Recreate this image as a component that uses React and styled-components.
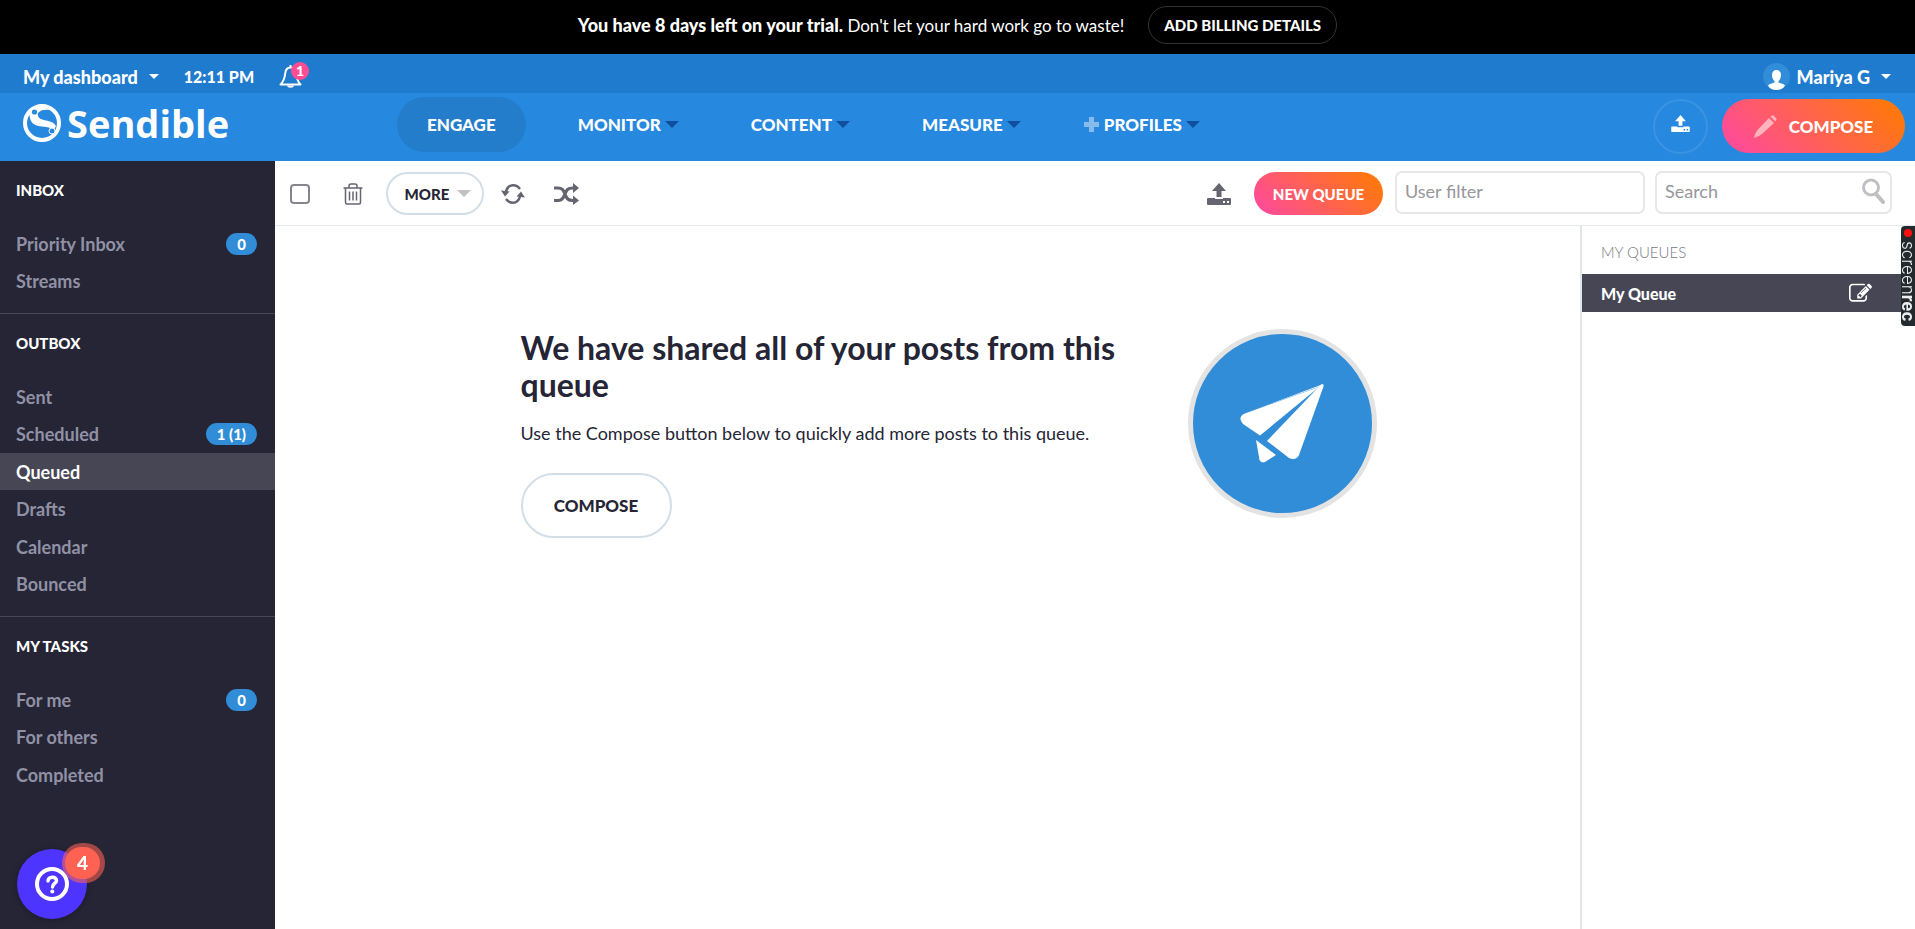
import React from "react";
import styled, { createGlobalStyle, css } from "styled-components";

const GlobalStyle = createGlobalStyle`
  * {
    box-sizing: border-box;
  }
  html, body, #root {
    height: 100%;
  }
  body {
    margin: 0;
    background: #fff;
    color: #252536;
    font-family: Lato, "Open Sans", sans-serif;
    font-size: 18px;
  }
  button, input {
    font-family: inherit;
  }
  h1, h2, p, ul {
    margin: 0;
    padding: 0;
  }
  ul {
    list-style: none;
  }
  a {
    color: inherit;
    text-decoration: none;
  }
  svg {
    display: block;
    flex: none;
  }
`;

const Page = styled.div`
  display: flex;
  flex-direction: column;
  min-height: 100%;
`;

/* trial banner */

const Banner = styled.div`
  display: flex;
  justify-content: center;
  align-items: flex-start;
  gap: 24px;
  height: 54px;
  padding: 6px 0 0;
  background: #000;
  color: #fff;
  line-height: 38px;
`;

const BannerText = styled.p`
  font-size: 17px;
  line-height: 38px;

  b {
    font-size: 18px;
    font-weight: 900;
  }
`;

const BillingButton = styled.button`
  height: 38px;
  padding: 0 15px;
  border: 1px solid #333;
  border-radius: 19px;
  background: none;
  color: #fff;
  font-size: 15px;
  font-weight: 900;
`;

/* header */

const TopBar = styled.div`
  display: flex;
  align-items: center;
  justify-content: space-between;
  height: 39px;
  padding: 6px 24px 0 23px;
  background: #1f7bcd;
  color: #fff;
`;

const TopGroup = styled.div`
  display: flex;
  align-items: center;
  gap: ${(props) => props.$gap}px;
`;

const TopButton = styled.button`
  display: flex;
  align-items: center;
  gap: 11px;
  padding: 0;
  border: 0;
  background: none;
  color: #fff;
  font-size: 18px;
  font-weight: 900;
`;

const Clock = styled.span`
  font-size: 16px;
  font-weight: 900;
`;

const BellButton = styled.button`
  position: relative;
  padding: 0;
  border: 0;
  background: none;
  color: #fff;
`;

const BellCount = styled.span`
  position: absolute;
  top: -2px;
  left: 12px;
  width: 18px;
  height: 18px;
  border-radius: 50%;
  background: #ff4d94;
  font-size: 14px;
  font-weight: 900;
  line-height: 18px;
  text-align: center;
`;

const Header = styled.header`
  display: flex;
  align-items: center;
  height: 68px;
  padding: 0 10px 2px 23px;
  background: #2688de;
  color: #fff;
`;

const Brand = styled.a`
  display: flex;
  align-items: center;
  gap: 6px;
  width: 374px;
  padding-bottom: 6px;
  font-family: "Open Sans", "Noto Sans", sans-serif;
  font-size: 38px;
  font-weight: 700;
  line-height: 46px;
`;

const Nav = styled.nav`
  display: flex;
  flex: 1;
  gap: 22px;
  padding-bottom: 4px;
`;

const NavLink = styled.a`
  display: flex;
  align-items: center;
  gap: 4px;
  height: 55px;
  padding: 0 ${(props) => (props.$menu ? 20 : 30)}px 0 ${(props) => (props.$icon ? 20 : 30)}px;
  border-radius: 28px;
  background: ${(props) => (props.$active ? "#247dcb" : "none")};
  font-size: 17px;
  font-weight: 900;
`;

const Caret = styled.span`
  border: ${(props) => props.$size}px solid transparent;
  border-top-color: ${(props) => props.$color || "#fff"};
  border-bottom: 0;
`;

const RoundButton = styled.button`
  display: flex;
  align-items: center;
  justify-content: center;
  width: 55px;
  height: 55px;
  margin-right: 14px;
  padding: 0 0 6px;
  border: 2px solid #3b93e1;
  border-radius: 50%;
  background: none;
  color: #fff;
`;

const GradientButton = styled.button`
  display: flex;
  align-items: center;
  justify-content: center;
  border: 0;
  border-radius: 28px;
  background: linear-gradient(45deg, #ff4d94 10%, #ff770f 90%);
  color: #fff;
  font-weight: 900;
  ${(props) =>
    props.$large
      ? css`
          gap: 12px;
          width: 183px;
          height: 54px;
          font-size: 17px;
        `
      : css`
          width: 129px;
          height: 43px;
          font-size: 15px;
        `}
`;

/* sidebar */

const Body = styled.div`
  display: flex;
  flex: 1;
`;

const Sidebar = styled.aside`
  width: 275px;
  background: #252536;
`;

const Section = styled.section`
  padding: 15px 0 13px;

  & + & {
    border-top: 1px solid #474757;
  }
`;

const SectionTitle = styled.h2`
  margin-bottom: 21px;
  padding: 0 16px;
  color: #fff;
  font-size: 15px;
  font-weight: 900;
  line-height: 28px;
`;

const SideItem = styled.li`
  height: 37px;

  &:nth-child(even) {
    height: 38px;
  }
`;

const SideLink = styled.a`
  display: flex;
  align-items: center;
  justify-content: space-between;
  height: 100%;
  padding: 0 18px 0 16px;
  background: ${(props) => (props.$active ? "#464655" : "none")};
  color: ${(props) => (props.$active ? "#fff" : "#9191a5")};
  font-size: 18px;
  font-weight: 700;
`;

const Count = styled.span`
  min-width: 31px;
  padding: 0 11px;
  border-radius: 11px;
  background: #318dd8;
  color: #fff;
  font-size: 15px;
  font-weight: 900;
  line-height: 22px;
  text-align: center;
`;

/* toolbar */

const Main = styled.main`
  display: flex;
  flex: 1;
  flex-direction: column;
  min-width: 0;
`;

const Toolbar = styled.div`
  display: flex;
  align-items: center;
  height: 65px;
  padding: 1px 23px 0 15px;
  border-bottom: 1px solid #e7eaed;
  color: #656572;
`;

const Spacer = styled.div`
  flex: 1;
`;

const SelectAll = styled.input`
  appearance: none;
  width: 20px;
  height: 20px;
  margin: 0 33px 0 0;
  border: 2px solid #85858e;
  border-radius: 4px;
`;

const IconButton = styled.button`
  display: flex;
  margin-right: ${(props) => props.$after || 0}px;
  padding: 0;
  border: 0;
  background: none;
  color: inherit;
`;

const OutlineButton = styled.button`
  display: flex;
  align-items: center;
  justify-content: center;
  gap: 8px;
  border: 2px solid #d3dee7;
  background: #fff;
  color: #252536;
  ${(props) =>
    props.$large
      ? css`
          width: 151px;
          height: 65px;
          border-radius: 33px;
          font-size: 17px;
          font-weight: 900;
        `
      : css`
          width: 98px;
          height: 43px;
          margin-right: 17px;
          padding: 0 0 0 6px;
          border-radius: 22px;
          font-size: 15px;
          font-weight: 900;
        `}
`;

const Field = styled.label`
  display: flex;
  align-items: center;
  width: ${(props) => props.$width}px;
  height: 43px;
  margin: 0 0 3px ${(props) => props.$before}px;
  padding: 0 5px 3px 8px;
  border: 2px solid #e7e7e8;
  border-radius: 7px;
  color: #bfbfc4;
`;

const TextInput = styled.input`
  flex: 1;
  min-width: 0;
  padding: 0;
  border: 0;
  outline: 0;
  background: none;
  color: #252536;
  font-size: 18px;

  &::placeholder {
    color: #96969b;
    opacity: 1;
  }
`;

/* content */

const Content = styled.div`
  display: flex;
  flex: 1;
`;

const EmptyArea = styled.div`
  flex: 1;
  padding: 103px 54px 0 96px;
`;

const EmptyState = styled.div`
  display: flex;
  justify-content: space-between;
  max-width: 856px;
  margin: 0 auto;
`;

const EmptyText = styled.div`
  width: 620px;
`;

const Title = styled.h1`
  font-size: 32px;
  font-weight: 700;
  line-height: 37px;
`;

const Hint = styled.p`
  margin: 16px 0 26px;
  font-size: 18px;
  line-height: 28px;
`;

const QueuePanel = styled.aside`
  width: 335px;
  border-left: 2px solid #e2e6ea;
`;

const QueueHeading = styled.h2`
  padding: 12px 19px 8px;
  color: #78787f;
  font-size: 15px;
  font-weight: 300;
  line-height: 28px;
`;

const QueueRow = styled.div`
  display: flex;
  align-items: center;
  justify-content: space-between;
  height: 38px;
  padding: 0 43px 0 19px;
  background: #464655;
  color: #fff;
  font-size: 16px;
  font-weight: 900;
`;

/* floating widgets */

const HelpButton = styled.button`
  position: fixed;
  bottom: 10px;
  left: 17px;
  display: flex;
  align-items: center;
  justify-content: center;
  width: 70px;
  height: 70px;
  padding: 0;
  border: 0;
  border-radius: 50%;
  background: #4d35ff;
  box-shadow: 0 1px 6px rgba(0, 0, 0, 0.3);
  color: #fff;
`;

const HelpCount = styled.span`
  position: absolute;
  top: -2px;
  left: 48px;
  width: 35px;
  height: 32px;
  border-radius: 16px;
  background: #ff6252;
  box-shadow: 1px 0 0 4px rgba(255, 98, 82, 0.58);
  font-size: 19px;
  font-weight: 900;
  line-height: 32px;
`;

const Recorder = styled.div`
  position: fixed;
  top: 226px;
  right: 0;
  display: flex;
  align-items: center;
  gap: 4px;
  width: 14px;
  height: 100px;
  padding-top: 3px;
  border-radius: 4px 0 0 4px;
  background: #24292e;
  color: #eee;
  font-family: Inter, sans-serif;
  font-size: 17px;
  font-weight: 300;
  line-height: 14px;
  writing-mode: vertical-rl;

  &::before {
    content: "";
    width: 8px;
    height: 8px;
    border-radius: 50%;
    background: #f11;
  }

  b {
    font-weight: 700;
  }
`;

const LogoMark = () => (
  <svg width="38" height="38" viewBox="0 0 38 38" fill="none">
    <circle cx="19" cy="19" r="17" stroke="#fff" strokeWidth="4" />
    <path
      d="M7 14C8 20 13 22 19 22.500C25 23 29 24 31 26L33 22C31 18 26 17 21 16C16 15 14 12 15 9C17 6 22 5 27 6C20 1 10 3 6 10Z"
      fill="#fff"
    />
    <circle cx="11.500" cy="8" r="2.600" fill="#2688de" />
    <circle cx="29" cy="27" r="3" fill="#2688de" stroke="#fff" strokeWidth="1" />
  </svg>
);

const BellIcon = () => (
  <svg width="24" height="25" viewBox="0 0 24 25" fill="none" stroke="currentColor" strokeWidth="2">
    <path d="M1.500 20.500H21.500C18 17 17.500 14 17 9C16.500 5 14 3.500 11.500 3.500C9 3.500 6.800 5 6.300 9C5.800 14 5 17 1.500 20.500Z" strokeLinejoin="round" />
    <path d="M11.500 1V4" />
    <path d="M8 21.500C8.500 24.500 14.500 24.500 15 21.500Z" fill="currentColor" stroke="none" />
  </svg>
);

const AvatarIcon = () => (
  <svg width="27" height="27" viewBox="0 0 27 27">
    <circle cx="13.500" cy="13.500" r="13.500" fill="#318dd8" />
    <path
      d="M13.500 7C16.500 7 18 9 18 12C18 14.500 17 17 15.500 18V19.500C18 20.500 21 21 22 22.500C20 26 17 27 13.500 27C10 27 7 26 5 22.500C6 21 9 20.500 11.500 19.500V18C10 17 9 14.500 9 12C9 9 10.500 7 13.500 7Z"
      fill="#fff"
    />
  </svg>
);

const UploadIcon = ({ width }) => (
  <svg width={width} height={Math.round((width * 22) / 24)} viewBox="0 0 24 22" fill="currentColor">
    <path d="M12 0L19 8H14.500V14H9.500V8H5Z" />
    <path
      fillRule="evenodd"
      d="M1 15H8V15.500Q8 16 8.500 16H15.500Q16 16 16 15.500V15H23Q24 15 24 16V21Q24 22 23 22H1Q0 22 0 21V16Q0 15 1 15ZM16 18V20H18V18ZM20 18V20H22V18Z"
    />
  </svg>
);

const PencilIcon = () => (
  <svg width="23" height="23" viewBox="0 0 23 23" fill="#ffb3bd">
    <path d="M15 3L20 8L8 19Q5 21.500 0 23Q1 18 3.500 15Z" />
    <path d="M16.500 1.500L18 0.400Q19 0 20 1L22.200 3.200Q23 4.200 22.200 5L21.300 6.500Z" />
  </svg>
);

const PlusIcon = () => (
  <svg width="17" height="17" viewBox="0 0 17 17" fill="#86bcec">
    <path d="M6 1H11V6H16V11H11V16H6V11H1V6H6Z" />
  </svg>
);

const TrashIcon = () => (
  <svg width="20" height="22" viewBox="0 0 20 22" fill="none" stroke="currentColor" strokeWidth="1.500">
    <path d="M0.500 5H19.500M6 5V3Q6 1 8 1H12Q14 1 14 3V5M2.500 5.500V19.500Q2.500 21 4 21H16Q17.500 21 17.500 19.500V5.500" />
    <path d="M6.500 8.500V17.500M10 8.500V17.500M13.500 8.500V17.500" />
  </svg>
);

const RefreshIcon = () => (
  <svg width="24" height="20" viewBox="0 0 24 20" fill="currentColor">
    <path d="M4.800 8C6 3.500 9 1.300 12 1.300C15 1.300 17.500 2.800 19 5M19.200 12C18 16.500 15 18.700 12 18.700C9 18.700 6.500 17.200 5 15" fill="none" stroke="currentColor" strokeWidth="2.500" />
    <path d="M0 6.500L8.500 7.500L4 12.500ZM24 13.500L15.500 12.500L20 7.500Z" />
  </svg>
);

const ShuffleIcon = () => (
  <svg width="25" height="22" viewBox="0 0 25 22" fill="currentColor">
    <path d="M0 5H4C9 5 9.500 8 11 11C12.500 15 13.500 17.500 19 17.500H20M0 17.500H4C9 17.500 9.500 14 11 11C12.500 7 13.500 5 19 5H20" fill="none" stroke="currentColor" strokeWidth="3.200" />
    <path d="M19 0L25 5L19 10ZM19 12.500L25 17.500L19 22Z" />
  </svg>
);

const SearchIcon = () => (
  <svg width="23" height="26" viewBox="0 0 23 26" fill="none" stroke="currentColor">
    <circle cx="9" cy="9.500" r="7.500" strokeWidth="3" />
    <path d="M14 16L21 24" strokeWidth="4" strokeLinecap="round" />
  </svg>
);

const EditIcon = () => (
  <svg width="23" height="23" viewBox="0 0 1792 1792" fill="currentColor">
    <path d="M888 1184l116-116-152-152-116 116v56h96v96h56zm440-720q-16-16-33 1l-350 350q-17 17-1 33t33-1l350-350q17-17 1-33zm80 594v190q0 119-84.500 203.500t-203.500 84.500h-832q-119 0-203.500-84.500t-84.500-203.500v-832q0-119 84.500-203.500t203.500-84.500h832q63 0 117 25 15 7 18 23 3 17-9 29l-49 49q-14 14-32 8-23-6-45-6h-832q-66 0-113 47t-47 113v832q0 66 47 113t113 47h832q66 0 113-47t47-113v-126q0-13 9-22l64-64q15-15 35-7t20 29zm-96-738l288 288-672 672h-288v-288zm444 132l-92 92-288-288 92-92q28-28 68-28t68 28l152 152q28 28 28 68t-28 68z" />
  </svg>
);

const PlaneIcon = () => (
  <svg width="189" height="189" viewBox="0 0 189 189">
    <circle cx="94.500" cy="94.500" r="92" fill="#318dd8" stroke="#e3e3e3" strokeWidth="5" />
    <g fill="#fff">
      <path d="M133 55.500Q136 54 135.500 57.500L111 126Q108 132 101 129L79 112Z" />
      <path d="M131 58L72 106.500L55 95Q49 88 57 84.500Z" />
      <path d="M68 111L88 126L77 133Q73 134.500 71.500 131Z" />
      <path d="M134 55.500L55 85L133 57Z" />
    </g>
  </svg>
);

const HelpIcon = () => (
  <svg width="34" height="34" viewBox="0 0 34 34" fill="none" stroke="#fff">
    <circle cx="17" cy="17" r="15" strokeWidth="4" />
    <path d="M13 14C13 9 21.500 9 21.500 13.500C21.500 16.500 17.500 16.500 17.500 20" strokeWidth="3.500" strokeLinecap="round" />
    <circle cx="17.300" cy="24.500" r="2" fill="#fff" stroke="none" />
  </svg>
);

const navItems = [
  { label: "ENGAGE", active: true },
  { label: "MONITOR", menu: true },
  { label: "CONTENT", menu: true },
  { label: "MEASURE", menu: true },
  { label: "PROFILES", menu: true, icon: true },
];

const sections = [
  {
    title: "INBOX",
    items: [{ label: "Priority Inbox", count: "0" }, { label: "Streams" }],
  },
  {
    title: "OUTBOX",
    items: [
      { label: "Sent" },
      { label: "Scheduled", count: "1 (1)" },
      { label: "Queued", active: true },
      { label: "Drafts" },
      { label: "Calendar" },
      { label: "Bounced" },
    ],
  },
  {
    title: "MY TASKS",
    items: [{ label: "For me", count: "0" }, { label: "For others" }, { label: "Completed" }],
  },
];

export default function App() {
  return (
    <Page>
      <GlobalStyle />
      <Banner>
        <BannerText>
          <b>You have 8 days left on your trial.</b> Don't let your hard work go to waste!
        </BannerText>
        <BillingButton>ADD BILLING DETAILS</BillingButton>
      </Banner>
      <TopBar>
        <TopGroup $gap={25}>
          <TopButton>
            My dashboard <Caret $size={5} />
          </TopButton>
          <Clock>12:11 PM</Clock>
          <BellButton aria-label="Notifications">
            <BellIcon />
            <BellCount>1</BellCount>
          </BellButton>
        </TopGroup>
        <TopGroup $gap={7}>
          <AvatarIcon />
          <TopButton>
            Mariya G <Caret $size={5} />
          </TopButton>
        </TopGroup>
      </TopBar>
      <Header>
        <Brand href="#">
          <LogoMark />
          Sendible
        </Brand>
        <Nav>
          {navItems.map((item) => (
            <NavLink key={item.label} href="#" $active={item.active} $menu={item.menu} $icon={item.icon}>
              {item.icon && <PlusIcon />}
              {item.label}
              {item.menu && <Caret $size={7} $color="#0f4f9b" />}
            </NavLink>
          ))}
        </Nav>
        <RoundButton aria-label="Upload">
          <UploadIcon width={19} />
        </RoundButton>
        <GradientButton $large>
          <PencilIcon />
          COMPOSE
        </GradientButton>
      </Header>
      <Body>
        <Sidebar>
          {sections.map((section) => (
            <Section key={section.title}>
              <SectionTitle>{section.title}</SectionTitle>
              <ul>
                {section.items.map((item) => (
                  <SideItem key={item.label}>
                    <SideLink href="#" $active={item.active}>
                      {item.label}
                      {item.count && <Count>{item.count}</Count>}
                    </SideLink>
                  </SideItem>
                ))}
              </ul>
            </Section>
          ))}
        </Sidebar>
        <Main>
          <Toolbar>
            <SelectAll type="checkbox" aria-label="Select all" />
            <IconButton aria-label="Delete" $after={23}>
              <TrashIcon />
            </IconButton>
            <OutlineButton>
              MORE <Caret $size={7} $color="#bfbfc4" />
            </OutlineButton>
            <IconButton aria-label="Refresh" $after={29}>
              <RefreshIcon />
            </IconButton>
            <IconButton aria-label="Shuffle">
              <ShuffleIcon />
            </IconButton>
            <Spacer />
            <IconButton aria-label="Import" $after={23}>
              <UploadIcon width={24} />
            </IconButton>
            <GradientButton>NEW QUEUE</GradientButton>
            <Field $width={250} $before={12}>
              <TextInput aria-label="User filter" placeholder="User filter" />
            </Field>
            <Field $width={237} $before={10}>
              <TextInput aria-label="Search" placeholder="Search" />
              <SearchIcon />
            </Field>
          </Toolbar>
          <Content>
            <EmptyArea>
              <EmptyState>
                <EmptyText>
                  <Title>We have shared all of your posts from this queue</Title>
                  <Hint>Use the Compose button below to quickly add more posts to this queue.</Hint>
                  <OutlineButton $large>COMPOSE</OutlineButton>
                </EmptyText>
                <PlaneIcon />
              </EmptyState>
            </EmptyArea>
            <QueuePanel>
              <QueueHeading>MY QUEUES</QueueHeading>
              <QueueRow>
                My Queue
                <IconButton aria-label="Edit queue">
                  <EditIcon />
                </IconButton>
              </QueueRow>
            </QueuePanel>
          </Content>
        </Main>
      </Body>
      <HelpButton aria-label="Help">
        <HelpIcon />
        <HelpCount>4</HelpCount>
      </HelpButton>
      <Recorder>
        <span>
          screen<b>rec</b>
        </span>
      </Recorder>
    </Page>
  );
}
